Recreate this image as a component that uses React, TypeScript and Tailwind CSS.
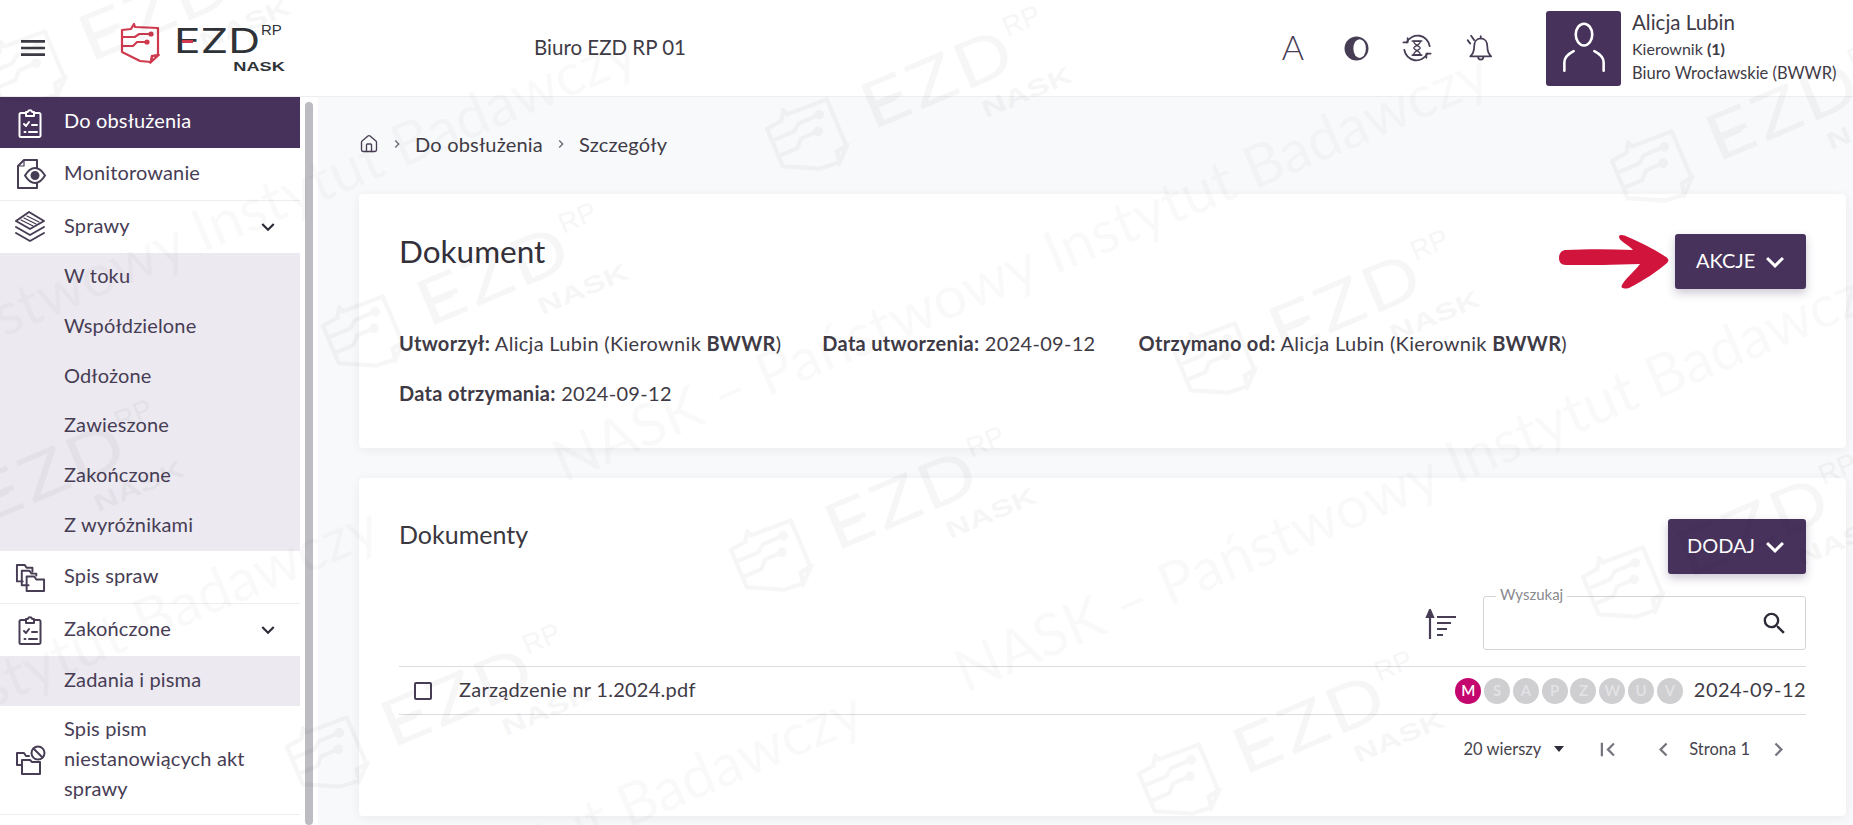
/**
 * EZD RP document details page: header, side menu, document card and the
 * attachments list, with the faint diagonal watermark over everything.
 */
import React from 'react';
import { Home } from 'lucide-react';
import { MdChevronLeft, MdChevronRight, MdExpandMore, MdFirstPage, MdMenu, MdSearch } from 'react-icons/md';

const FONT = "font-['Lato','Noto_Sans',sans-serif]";
const INK = '#473d55';

type IconProps = { className?: string };

function IconBase({ className, children }: IconProps & { children: React.ReactNode }) {
  return (
    <svg viewBox="0 0 32 32" fill="none" stroke="currentColor" strokeWidth="2" strokeLinecap="round" strokeLinejoin="round" className={className}>
      {children}
    </svg>
  );
}

function ClipboardIcon({ className }: IconProps) {
  return (
    <IconBase className={className}>
      <path d="M12 6H7a1.500 1.500 0 0 0-1.500 1.500v21A1.500 1.500 0 0 0 7 30h18a1.500 1.500 0 0 0 1.500-1.500v-21A1.500 1.500 0 0 0 25 6h-5" />
      <path d="M12 9V5h1.800a2.300 2.300 0 0 1 4.400 0H20v4z" />
      <path d="M10 17l2 2 3-4M18 18h5M10.500 25h1M15 25h8" />
    </IconBase>
  );
}

function MonitorIcon({ className }: IconProps) {
  return (
    <IconBase className={className}>
      <path d="M23 10V2H10L4 8v22h19v-5" />
      <path d="M10 8V3M4 8h6" strokeWidth="1.200" />
      <path d="M11 17.500c3-5 7-7.500 10-7.500s7 2.500 10 7.500c-3 5-7 7.500-10 7.500s-7-2.500-10-7.500z" />
      <circle cx="21" cy="17.500" r="3.500" fill="currentColor" />
    </IconBase>
  );
}

function LayersIcon({ className }: IconProps) {
  return (
    <IconBase className={className}>
      <path d="M15 1L2 10l14 8 14-8z" />
      <path d="M2 16l14 8 14-8M2 22l14 8 14-8" />
      <path d="M10 7l12 6M13 5l12 6M7 9l12 6" strokeWidth="1.200" />
    </IconBase>
  );
}

function FoldersIcon({ className }: IconProps) {
  return (
    <IconBase className={className}>
      <path d="M8 20H2V3h8l2 3h6v4" />
      <path d="M14 24H7V9h8l2 3h5v2" />
      <path d="M12 30V15h8l2 3h8v12z" />
    </IconBase>
  );
}

function FolderBanIcon({ className }: IconProps) {
  return (
    <IconBase className={className}>
      <path d="M8 21H3V9h7l2 3h3" />
      <path d="M8 30V16h8l2 2h8v12z" />
      <circle cx="24" cy="9" r="6.500" />
      <path d="M19.500 4.500l9 9" />
    </IconBase>
  );
}

function HistoryIcon({ className }: IconProps) {
  return (
    <IconBase className={className}>
      <path d="M5 10A13 13 0 0 1 29.500 14M27 22A13 13 0 0 1 2.500 18" />
      <path d="M1.500 10H6V5.500M30.500 22H26v4.500" strokeWidth="1.800" />
      <path d="M11 8.500h10M11 23.500h10" strokeWidth="1.800" />
      <path d="M12.500 9c0 4 7 5 7 7s-7 3-7 7h7c0-4-7-5-7-7s7-3 7-7z" strokeWidth="1.400" />
    </IconBase>
  );
}

function BellIcon({ className }: IconProps) {
  return (
    <IconBase className={className}>
      <path d="M18 5c5 0 7.500 4 7.500 9 0 6 1.500 9 4.500 11.500H6c3-2.500 4.500-5.500 4.500-11.500 0-5 2.500-9 7.500-9z" />
      <path d="M18 2.500V5M15 26c0 4.500 6 4.500 6 0M3 7l3 4M7 2l3.500 5" />
    </IconBase>
  );
}

function SortIcon({ className }: IconProps) {
  return (
    <svg viewBox="0 0 32 32" fill="none" stroke={INK} strokeWidth="2.200" className={className}>
      <path d="M5 30V5" />
      <path d="M2 8l3-7 3 7z" fill={INK} />
      <path d="M12 8h19M12 14h14M12 20h10M12 26h6" />
    </svg>
  );
}

function ArrowMark({ className }: IconProps) {
  return (
    <svg viewBox="0 0 110 54" className={className}>
      <path
        fill="#d0143c"
        d="M7 15c20-1 44-1 67 0C70 10 60 6 60 2c0-3 5-2 9 0 12 5 26 12 38 20 3 2 3 4 1 6-9 8-24 18-38 25-4 1-9 1-7-3 3-6 12-13 18-21-26 1-50 1-74 1-5 0-7-3-7-7 0-5 3-8 7-8z"
      />
    </svg>
  );
}

function LogoMark({ className, stroke = '#cf3a4e' }: IconProps & { stroke?: string }) {
  return (
    <svg viewBox="0 0 40 42" fill="none" stroke={stroke} strokeWidth="2.200" className={className}>
      <path d="M2 8l9-1 3-5 1 3 23 1v27l-6 1-1 6-11-1-18-9z" strokeLinejoin="round" />
      <path d="M32 34l-1 6 7-6.500z" />
      <path d="M3 15h12l4-3h12M3 24h10l4-4h10" />
      <circle cx="31" cy="12" r="1.500" fill={stroke} />
      <circle cx="27" cy="20" r="1.500" fill={stroke} />
    </svg>
  );
}

function Logo({ mono }: { mono?: boolean }) {
  const ink = mono ? 'text-black' : 'text-[#2f3338]';
  return (
    <div className="flex items-start gap-[14px] w-[165px] h-[97px]">
      <LogoMark className="w-[40px] h-[42px] shrink-0 mt-[22px]" stroke={mono ? '#000' : '#cf3a4e'} />
      <div className="relative flex-1 h-[97px]">
        <span className={`absolute left-0 top-[21px] text-[34px] leading-[40px] font-normal font-['Inter',sans-serif] origin-left scale-x-[1.3] ${ink}`}>
          EZD
        </span>
        <span className={`absolute left-[8px] top-[40px] w-[11px] h-[3px] ${mono ? 'bg-black' : 'bg-[#cf3a4e]'}`} />
        <span className={`absolute left-[87px] top-[22px] text-[15px] leading-4 font-['Liberation_Sans',sans-serif] ${ink}`}>RP</span>
        <span className={`absolute right-0 top-[59px] text-[13px] leading-4 font-black font-['Liberation_Sans',sans-serif] origin-right scale-x-[1.4] ${ink}`}>
          NASK
        </span>
      </div>
    </div>
  );
}

const WATERMARK_LINES = [
  { x: 555, y: 433 },
  { x: 957, y: 643 },
  { x: -297, y: 411 },
  { x: -71, y: 1071 },
  { x: -555, y: 886 },
];

const WATERMARK_LOGOS = [
  { x: 807, y: 138 },
  { x: 1215, y: 362 },
  { x: 1652, y: 170 },
  { x: 771, y: 559 },
  { x: 1623, y: 586 },
  { x: 1179, y: 783 },
  { x: 363, y: 335 },
  { x: 327, y: 756 },
  { x: 25, y: 70 },
  { x: -81, y: 532 },
];

function Watermark() {
  return (
    <div className="absolute inset-0 overflow-hidden pointer-events-none">
      {WATERMARK_LINES.map((l, i) => (
        <span
          key={i}
          className="absolute origin-left -rotate-[23deg] whitespace-nowrap text-[59px] leading-none text-black/[0.022]"
          style={{ left: l.x, top: l.y }}
        >
          NASK – Państwowy Instytut Badawczy
        </span>
      ))}
      {WATERMARK_LOGOS.map((l, i) => (
        <div key={i} className="absolute w-0 h-0 -rotate-[23deg] scale-[1.85] opacity-[0.03]" style={{ left: l.x, top: l.y }}>
          <div className="absolute -left-[20px] -top-[43px]">
            <Logo mono />
          </div>
        </div>
      ))}
    </div>
  );
}

function Header() {
  return (
    <header className="h-[97px] bg-white border-b border-[#eeeef0] flex items-center shrink-0">
      <MdMenu className="w-[32px] h-[32px] ml-[17px] text-[#3d3a44]" />
      <div className="ml-[71px]">
        <Logo />
      </div>
      <span className="ml-[249px] text-[20.500px] text-[#3f3b46] pb-[2px]">Biuro EZD RP 01</span>
      <div className="ml-auto flex items-center text-[#473d55]">
        <span className="w-[24px] text-center text-[34px] leading-none font-light mr-[39px] -mt-[2px]">A</span>
        <svg viewBox="0 0 24 24" className="w-[25px] h-[25px] mr-[33px]">
          <circle cx="12" cy="12" r="10.500" fill="#473d55" stroke="#473d55" strokeWidth="2" />
          <ellipse cx="15" cy="12" rx="6" ry="9" fill="#fff" />
        </svg>
        <HistoryIcon className="w-[30px] h-[30px] mr-[33px]" />
        <BellIcon className="w-[28px] h-[28px] mr-[53px]" />
        <div className="w-[75px] h-[75px] rounded-[3px] bg-[#47325c] flex items-center justify-center mr-[11px]">
          <svg viewBox="0 0 60 60" fill="none" stroke="#fff" strokeWidth="2.500" strokeLinecap="round" className="w-[62px] h-[62px]">
            <ellipse cx="30" cy="17" rx="8" ry="10.500" />
            <path d="M20 33c-6 3-9 6-9 11v8M40 33c6 3 9 6 9 11v8" />
          </svg>
        </div>
        <div className="w-[221px] text-[#3f3b46] flex flex-col -mt-[3px]">
          <span className="text-[20.500px] leading-[26px]">Alicja Lubin</span>
          <span className="text-[16px] leading-[24px] mt-[2px]">
            Kierownik <b className="font-bold">(1)</b>
          </span>
          <span className="text-[16.500px] leading-[23px] mt-[1px] whitespace-nowrap">Biuro Wrocławskie (BWWR)</span>
        </div>
      </div>
    </header>
  );
}

function NavItem({
  label,
  icon,
  active,
  chevron,
  className,
}: {
  label: React.ReactNode;
  icon?: React.ReactNode;
  active?: boolean;
  chevron?: boolean;
  className?: string;
}) {
  return (
    <div className={`flex items-center relative ${active ? 'bg-[#47325c] text-white' : 'text-[#473d55]'} ${className ?? ''}`}>
      <span className="w-[64px] shrink-0 flex justify-center pr-[4px]">{icon}</span>
      <span className="text-[20px] leading-[30px] tracking-[0.15px] flex-1 pb-[5px]">{label}</span>
      {chevron && <MdExpandMore className="w-[26px] h-[26px] mr-[19px] text-[#2f2b38]" />}
    </div>
  );
}

function SubItem({ label, className }: { label: string; className?: string }) {
  return <div className={`flex items-center pl-[64px] pb-[5px] text-[20px] tracking-[0.15px] text-[#473d55] ${className ?? ''}`}>{label}</div>;
}

const SPRAWY_SUBMENU = ['W toku', 'Współdzielone', 'Odłożone', 'Zawieszone', 'Zakończone', 'Z wyróżnikami'];

function Sidebar() {
  return (
    <div className="w-[318px] shrink-0 flex bg-white relative">
      <nav className="w-[300px] shrink-0">
        <NavItem active label="Do obsłużenia" icon={<ClipboardIcon className="w-[32px] h-[32px]" />} className="h-[51px]" />
        <NavItem label="Monitorowanie" icon={<MonitorIcon className="w-[32px] h-[32px]" />} className="h-[53px] border-b border-[#eeeef0]" />
        <NavItem label="Sprawy" chevron icon={<LayersIcon className="w-[32px] h-[32px]" />} className="h-[52px]" />
        <div className="bg-[#eceaf0] h-[298px]">
          {SPRAWY_SUBMENU.map((s) => (
            <SubItem key={s} label={s} className="h-[49.700px]" />
          ))}
        </div>
        <NavItem label="Spis spraw" icon={<FoldersIcon className="w-[31px] h-[31px]" />} className="h-[53px] border-b border-[#eeeef0]" />
        <NavItem label="Zakończone" chevron icon={<ClipboardIcon className="w-[32px] h-[32px]" />} className="h-[52px]" />
        <SubItem label="Zadania i pisma" className="bg-[#eceaf0] h-[50px]" />
        <NavItem
          label={
            <>
              Spis pism
              <br />
              niestanowiących akt
              <br />
              sprawy
            </>
          }
          icon={<FolderBanIcon className="w-[32px] h-[32px]" />}
          className="h-[109px] border-b border-[#eeeef0]"
        />
      </nav>
      <div className="ml-[5px] mt-[5px] w-[8px] rounded-full bg-[#bcbcc2]" />
    </div>
  );
}

function Breadcrumb() {
  return (
    <div className="h-[97px] flex items-center text-[20px] tracking-[0.2px] text-[#3f3b46] pb-[4px]">
      <Home className="w-[20px] h-[20px] text-[#473d55]" strokeWidth={1.600} />
      <MdChevronRight className="w-[16px] h-[16px] mx-[10px] text-[#6d6a75]" />
      <span>Do obsłużenia</span>
      <MdChevronRight className="w-[16px] h-[16px] mx-[10px] text-[#6d6a75]" />
      <span>Szczegóły</span>
    </div>
  );
}

function ActionButton({ label, className }: { label: string; className?: string }) {
  return (
    <button className={`h-[55px] rounded-[3px] bg-[#47325c] text-white text-[20px] flex items-center gap-[2px] shadow-[0_4px_10px_rgba(71,50,92,0.28)] ${className ?? ''}`}>
      <span className="pb-[3px]">{label}</span>
      <MdExpandMore className="w-[36px] h-[36px]" />
    </button>
  );
}

function Field({ label, children, className }: { label: string; children: React.ReactNode; className?: string }) {
  return (
    <span className={`text-[20px] tracking-[0.3px] text-[#3f3b46] whitespace-nowrap ${className ?? ''}`}>
      <b className="font-bold">{label}</b> {children}
    </span>
  );
}

const CARD = 'bg-white rounded-[4px] shadow-[0_2px_10px_rgba(60,60,80,0.07)] px-[40px]';

function DocumentCard() {
  return (
    <section className={`h-[254px] ${CARD}`}>
      <div className="flex justify-between items-start">
        <h1 className="text-[31.500px] leading-[40px] mt-[37px] text-[#33303a]">Dokument</h1>
        <div className="flex items-center mt-[40px]">
          <ArrowMark className="w-[110px] h-[54px] mr-[6px]" />
          <ActionButton label="AKCJE" className="w-[131px] pl-[21px]" />
        </div>
      </div>
      <div className="flex mt-[39px]">
        <Field label="Utworzył:">
          Alicja Lubin (Kierownik <b className="font-bold">BWWR</b>)
        </Field>
        <Field label="Data utworzenia:" className="ml-[41px]">
          2024-09-12
        </Field>
        <Field label="Otrzymano od:" className="ml-[43px]">
          Alicja Lubin (Kierownik <b className="font-bold">BWWR</b>)
        </Field>
      </div>
      <div className="mt-[20px]">
        <Field label="Data otrzymania:">2024-09-12</Field>
      </div>
    </section>
  );
}

const STATUS = ['M', 'S', 'A', 'P', 'Z', 'W', 'U', 'V'];

function DocumentsCard() {
  return (
    <section className={`h-[338px] mt-[30px] ${CARD}`}>
      <div className="flex justify-between items-start h-[118px]">
        <h2 className="text-[25px] leading-[32px] mt-[40px] text-[#3a3740]">Dokumenty</h2>
        <ActionButton label="DODAJ" className="w-[138px] pl-[19px] mt-[41px]" />
      </div>
      <div className="flex items-start justify-end h-[70px]">
        <SortIcon className="w-[32px] h-[32px] mr-[26px] mt-[13px]" />
        <div className="relative w-[323px] h-[54px] rounded-[3px] border border-[#d4d4d8] flex items-center justify-end pr-[16px]">
          <span className="absolute left-[12px] -top-[12px] bg-white px-[4px] text-[15px] leading-[18px] text-[#8a8a90]">Wyszukaj</span>
          <MdSearch className="w-[29px] h-[29px] text-[#2f2b38]" />
        </div>
      </div>
      <div className="h-[49px] border-y border-[#dcdce0] flex items-center">
        <span className="w-[18px] h-[18px] rounded-[2px] border-2 border-[#473d55] ml-[15px] mr-[27px]" />
        <span className="text-[20px] tracking-[0.25px] text-[#3f3b46] flex-1 pb-[3px]">Zarządzenie nr 1.2024.pdf</span>
        <div className="flex gap-[2.800px] mr-[11px]">
          {STATUS.map((s, i) => (
            <span
              key={s}
              className={`w-[26px] h-[26px] rounded-full flex items-center justify-center text-[15px] font-semibold ${i === 0 ? 'bg-[#c4076f] text-white' : 'bg-[#cfcfd1] text-[#e3e3e5]'}`}
            >
              {s}
            </span>
          ))}
        </div>
        <span className="text-[20px] tracking-[0.45px] text-[#3f3b46] pb-[3px]">2024-09-12</span>
      </div>
      <div className="h-[68px] flex items-center justify-end text-[16.500px] text-[#46434c]">
        <span>20 wierszy</span>
        <span className="ml-[13px] w-0 h-0 border-x-[5.500px] border-x-transparent border-t-[6px] border-t-[#2f2b38]" />
        <MdFirstPage className="w-[27px] h-[27px] ml-[30px] text-[#77747e]" />
        <MdChevronLeft className="w-[27px] h-[27px] ml-[29px] text-[#77747e]" />
        <span className="ml-[12px]">Strona 1</span>
        <MdChevronRight className="w-[27px] h-[27px] ml-[15px] mr-[14px] text-[#77747e]" />
      </div>
    </section>
  );
}

export default function App() {
  return (
    <div className={`relative h-[825px] w-[1853px] overflow-hidden flex flex-col bg-[#f8f9fa] ${FONT}`}>
      <Header />
      <div className="flex flex-1 min-h-0">
        <Sidebar />
        <main className="flex-1 pl-[41px] pr-[7px] overflow-hidden">
          <Breadcrumb />
          <DocumentCard />
          <DocumentsCard />
        </main>
      </div>
      <Watermark />
    </div>
  );
}
